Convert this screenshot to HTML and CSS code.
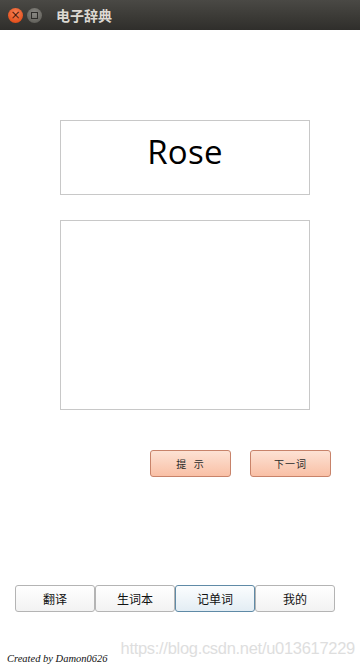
FILE: index.html
```html
<!DOCTYPE html>
<html lang="zh-CN">
<head>
    <meta charset="UTF-8">
    <meta name="viewport" content="width=device-width, initial-scale=1.0">
    <title>电子辞典</title>
    <link rel="stylesheet" href="styles.css">
</head>
<body>
    <div class="titlebar">
        <span class="win-btn close">×</span>
        <span class="win-btn max"><i></i></span>
        <span class="title">电子辞典</span>
    </div>

    <div class="main">
        <div class="word-box">Rose</div>
        <div class="hint-box"></div>

        <div class="actions">
            <button class="action">提&nbsp;&nbsp;示</button>
            <button class="action">下一词</button>
        </div>

        <div class="tabs">
            <button class="tab">翻译</button>
            <button class="tab">生词本</button>
            <button class="tab active">记单词</button>
            <button class="tab">我的</button>
        </div>

        <div class="footer">
            <span class="credit">Created by Damon0626</span>
            <span class="watermark">https://blog.csdn.net/u013617229</span>
        </div>
    </div>
</body>
</html>
```

FILE: styles.css
```css
* {
    box-sizing: border-box;
    margin: 0;
    padding: 0;
}

body {
    font-family: "Noto Sans CJK SC", "Open Sans", sans-serif;
    background: #fff;
    width: 360px;
    height: 667px;
    overflow: hidden;
}

.titlebar {
    height: 30px;
    background: linear-gradient(#4a4945, #3a3935 60%, #2f2e2b);
    display: flex;
    align-items: center;
    padding-left: 8px;
}

.win-btn {
    width: 15px;
    height: 15px;
    border-radius: 50%;
    display: flex;
    align-items: center;
    justify-content: center;
    margin-right: 4px;
}

.close {
    background: radial-gradient(circle at 50% 35%, #f7845a, #e5531f 70%, #b83c12);
    color: #4a1a08;
    font-size: 12px;
    line-height: 1;
    font-family: "DejaVu Sans", sans-serif;
}

.max {
    background: radial-gradient(circle at 50% 35%, #8a8984, #66655f 70%, #4a4945);
}

.max i {
    width: 7px;
    height: 7px;
    border: 1px solid #2e2d2a;
}

.title {
    margin-left: 10px;
    color: #dcd9d2;
    font-weight: bold;
    font-size: 14px;
}

.main {
    display: flex;
    flex-direction: column;
}

.word-box {
    margin: 90px 0 0 60px;
    width: 250px;
    height: 75px;
    border: 1px solid #c8c8c8;
    display: flex;
    align-items: center;
    justify-content: center;
    font-family: "Open Sans", sans-serif;
    font-size: 33px;
    letter-spacing: 0.3px;
    color: #000;
    padding-bottom: 12px;
}

.hint-box {
    margin: 25px 0 0 60px;
    width: 250px;
    height: 190px;
    border: 1px solid #c8c8c8;
}

.actions {
    display: flex;
    gap: 19px;
    margin: 40px 0 0 150px;
}

.action {
    width: 81px;
    height: 27px;
    border: 1px solid #c8836a;
    border-radius: 3px;
    background: linear-gradient(#fde2d4, #f9c0a6);
    font-family: "Noto Sans CJK SC", sans-serif;
    font-size: 10px;
    color: #2a2a2a;
    letter-spacing: 1px;
}

.tabs {
    display: flex;
    margin: 108px 0 0 15px;
}

.tab {
    width: 80px;
    height: 27px;
    border: 1px solid #b4b4b4;
    border-radius: 3px;
    background: linear-gradient(#ffffff, #f2f2f2);
    font-family: "Noto Sans CJK SC", sans-serif;
    font-size: 12px;
    color: #111;
}

.tab.active {
    border-color: #5f8aa6;
    background: linear-gradient(#fbfdfe, #e3edf4);
}

.footer {
    display: flex;
    align-items: flex-end;
    margin-top: 27px;
    padding-left: 7px;
}

.credit {
    font-family: "Liberation Serif", serif;
    font-style: italic;
    font-size: 10.5px;
    color: #111;
    line-height: 14px;
}

.watermark {
    margin-left: 13px;
    margin-bottom: 9px;
    font-family: "Liberation Sans", sans-serif;
    font-size: 16.5px;
    color: #dedede;
    letter-spacing: -0.3px;
    line-height: 18px;
}
```
